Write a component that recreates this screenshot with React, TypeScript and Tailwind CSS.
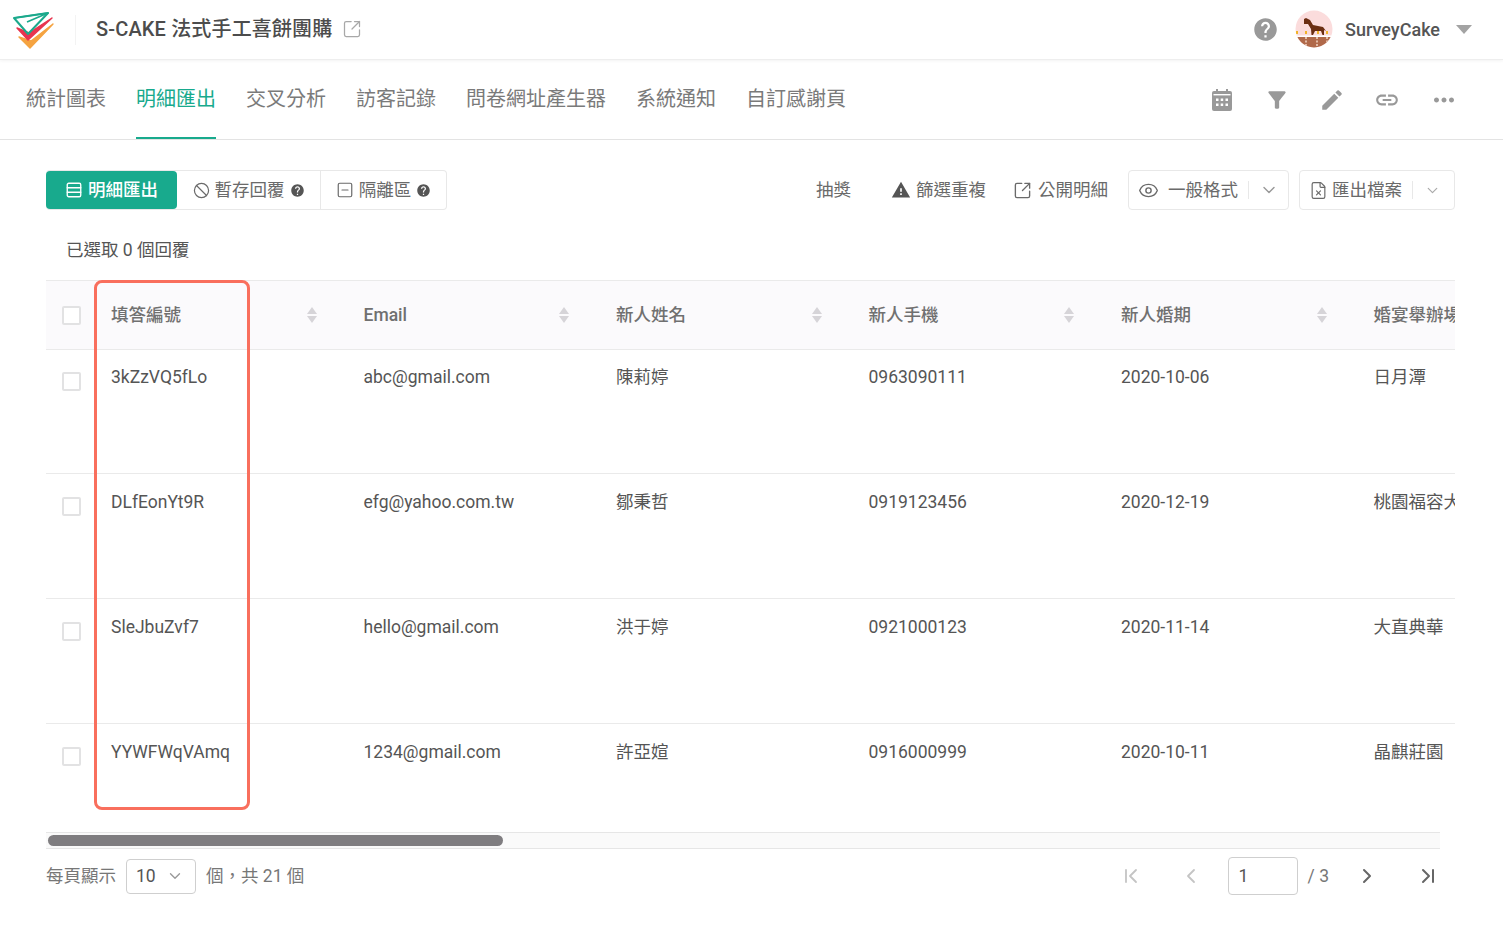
import { Ban, ChevronDown, ChevronFirst, ChevronLast, ChevronLeft, ChevronRight, Eye, FileX, Rows3, SquareArrowOutUpRight, SquareMinus } from "lucide-react"
import { MdEdit, MdFilterAlt, MdHelp, MdLink, MdMoreHoriz, MdWarning } from "react-icons/md"

const font = "font-['Roboto','Noto_Sans_CJK_TC','Noto_Sans',sans-serif]"

const tabs = ["統計圖表", "明細匯出", "交叉分析", "訪客記錄", "問卷網址產生器", "系統通知", "自訂感謝頁"]
const columns = ["填答編號", "Email", "新人姓名", "新人手機", "新人婚期", "婚宴舉辦場地"]

const rows = [
  ["3kZzVQ5fLo", "abc@gmail.com", "陳莉婷", "0963090111", "2020-10-06", "日月潭"],
  ["DLfEonYt9R", "efg@yahoo.com.tw", "鄒秉哲", "0919123456", "2020-12-19", "桃園福容大飯店"],
  ["SleJbuZvf7", "hello@gmail.com", "洪于婷", "0921000123", "2020-11-14", "大直典華"],
  ["YYWFWqVAmq", "1234@gmail.com", "許亞媗", "0916000999", "2020-10-11", "晶麒莊園"],
]

function Logo() {
  return (
    <svg width="42" height="40" viewBox="0 0 42 40" fill="none" className="shrink-0">
      <path d="M7 27 L18 38 L41 14 L19 31 Z" fill="#f5a340" stroke="#f5a340" strokeWidth="1.4" strokeLinejoin="round" />
      <path d="M5 18 L16 30 L40 8 L17 23 Z" fill="#e8344f" stroke="#e8344f" strokeWidth="1.4" strokeLinejoin="round" />
      <path d="M2 8 L36 3 L16 24 Z" stroke="#1ba98c" strokeWidth="2" strokeLinejoin="round" />
      <path d="M2 8 L36 3 L15 12" stroke="#1ba98c" strokeWidth="1.6" strokeLinejoin="round" />
    </svg>
  )
}

function Avatar() {
  return (
    <svg width="38" height="38" viewBox="0 0 38 38" className="shrink-0">
      <clipPath id="av"><circle cx="19" cy="19" r="18.5" /></clipPath>
      <g clipPath="url(#av)">
        <rect width="38" height="38" fill="#fbdcdc" />
        <rect y="27" width="38" height="11" fill="#b0694a" />
        <rect y="25.5" width="38" height="1.5" fill="#ffffff" />
        <path d="M9 9 L11 8 L15 10 L18 15 L28 17 L31 21 L29 20 L29 25 L27.5 25 L26 21 L20 21 L18 25 L16.5 25 L16 19 L13 14 L9 14 Z" fill="#6b2e12" />
        <path d="M1 21h2v3H1zM10 21h2v3h-2zM22 21h2v3h-2zM31 21h2v3h-2z" fill="#f0b429" />
        <path d="M11 27v10M22 27v10M32 27v8" stroke="#f3d9c8" strokeWidth="1.5" strokeDasharray="2 1.5" />
      </g>
    </svg>
  )
}

function CalendarIcon() {
  return (
    <svg width="20" height="22" viewBox="0 0 20 22" className="shrink-0">
      <path d="M4 0h2v3H4zM14 0h2v3h-2z" fill="#999999" />
      <rect y="2" width="20" height="20" rx="2" fill="#999999" />
      <rect x="1.5" y="5" width="17" height="1.4" fill="#ffffff" />
      <path d="M4 9.5h2.5V12H4zM8.7 9.5h2.5V12H8.7zM13.5 9.5H16V12h-2.5zM4 14.5h2.5V17H4zM8.7 14.5h2.5V17H8.7zM13.5 14.5H16V17h-2.5z" fill="#ffffff" />
    </svg>
  )
}

function SortIcon() {
  return (
    <svg width="12" height="18" viewBox="0 0 12 18" className="shrink-0" fill="#d6d4d8">
      <path d="M6 1 L11 8 H1 Z" />
      <path d="M1 10 H11 L6 17 Z" />
    </svg>
  )
}

function Checkbox() {
  return <span className="block h-[19px] w-[19px] rounded-[2px] border-2 border-[#e2e2e3] bg-white" />
}

export default function App() {
  return (
    <div className={`${font} relative min-h-[931px] bg-white text-[#555555] antialiased`}>
      {/* top bar */}
      <header className="flex h-[60px] items-center border-b border-[#eeeeee] pl-[12px] pr-[31px] shadow-[0_1px_3px_rgba(0,0,0,0.05)]">
        <Logo />
        <div className="ml-[21px] h-[30px] w-px bg-[#f3f3f3]" />
        <div className="mb-[2px] ml-[20px] text-[20px] font-medium leading-none tracking-[0.15px] text-[#4c4c4c]">S-CAKE 法式手工喜餅團購</div>
        <SquareArrowOutUpRight className="mb-[2px] ml-[10px] h-[20px] w-[20px] text-[#a8a8a8]" strokeWidth={1.5} />
        <div className="ml-auto flex items-center">
          <MdHelp className="h-[27px] w-[27px] text-[#999999]" />
          <div className="mb-[2px] ml-[16px]"><Avatar /></div>
          <span className="ml-[12px] text-[18px] font-medium text-[#555555]">SurveyCake</span>
          <svg width="16" height="9" viewBox="0 0 16 9" className="ml-[16px]" fill="#a3a3a3"><path d="M0 0 H16 L8 9 Z" /></svg>
        </div>
      </header>

      {/* tabs */}
      <nav className="flex h-[80px] items-stretch border-b border-[#e3e3e3] pl-[26px] pr-[44px]">
        <div className="flex gap-[30px]">
          {tabs.map((t) => (
            <div
              key={t}
              className={
                t === "明細匯出"
                  ? "flex items-center border-b-2 border-[#18aa8d] text-[20px] text-[#18aa8d]"
                  : "flex items-center border-b-2 border-transparent text-[20px] text-[#7a7a7a]"
              }
            >
              {t}
            </div>
          ))}
        </div>
        <div className="ml-auto flex items-center gap-[29px] text-[#999999]">
          <span className="flex w-[26px] justify-center"><CalendarIcon /></span>
          <MdFilterAlt className="h-[26px] w-[26px]" />
          <MdEdit className="h-[26px] w-[26px]" />
          <MdLink className="h-[26px] w-[26px]" />
          <MdMoreHoriz className="h-[30px] w-[30px]" />
        </div>
      </nav>

      <main className="pl-[46px] pr-[48px]">
        {/* toolbar */}
        <div className="flex items-center pt-[30px] text-[17.5px]">
          <div className="flex h-[40px] items-stretch rounded-[4px] border border-[#e8e8e8] border-l-0">
            <div className="flex w-[131px] items-center justify-center gap-[5px] rounded-[4px] bg-[#18aa8d] font-medium text-white">
              <Rows3 className="h-[18px] w-[18px]" strokeWidth={1.8} />
              明細匯出
            </div>
            <div className="flex w-[144px] items-center justify-center gap-[5px] border-r border-[#e8e8e8] text-[#6a6a6a]">
              <Ban className="h-[17px] w-[17px]" strokeWidth={1.7} />
              暫存回覆
              <MdHelp className="h-[15px] w-[15px] text-[#555555]" />
            </div>
            <div className="flex w-[125px] items-center justify-center gap-[5px] text-[#6a6a6a]">
              <SquareMinus className="h-[18px] w-[18px]" strokeWidth={1.6} />
              隔離區
              <MdHelp className="h-[15px] w-[15px] text-[#555555]" />
            </div>
          </div>

          <div className="ml-auto flex items-center text-[#6a6a6a]">
            <span>抽獎</span>
            <MdWarning className="ml-[40px] h-[20px] w-[20px] text-[#555555]" />
            <span className="ml-[5px]">篩選重複</span>
            <SquareArrowOutUpRight className="ml-[27px] h-[19px] w-[19px]" strokeWidth={1.7} />
            <span className="ml-[6px]">公開明細</span>
            <div className="ml-[20px] flex h-[40px] w-[161px] items-center rounded-[4px] border border-[#e8e8e8] pl-[9px]">
              <Eye className="h-[21px] w-[21px]" strokeWidth={1.6} />
              <span className="ml-[9px]">一般格式</span>
              <span className="ml-[10px] h-[18px] w-px bg-[#e8e8e8]" />
              <ChevronDown className="ml-[10px] h-[20px] w-[20px] text-[#999999]" strokeWidth={1.7} />
            </div>
            <div className="ml-[10px] flex h-[40px] w-[156px] items-center rounded-[4px] border border-[#e8e8e8] pl-[9px]">
              <FileX className="h-[19px] w-[19px]" strokeWidth={1.5} />
              <span className="ml-[4px]">匯出檔案</span>
              <span className="ml-[10px] h-[18px] w-px bg-[#e8e8e8]" />
              <ChevronDown className="ml-[11px] h-[17px] w-[17px] text-[#aaaaaa]" strokeWidth={1.7} />
            </div>
          </div>
        </div>

        <div className="flex h-[70px] items-center pl-[20px] pt-[10px] text-[17.5px] text-[#555555]">已選取 0 個回覆</div>

        {/* table */}
        <div className="w-[1409px] overflow-hidden text-[17.5px]">
          <div className="w-[1600px]">
            <div className="flex h-[70px] w-[1409px] items-center border-y border-[#eaeaea] bg-[#fbfafc]">
              <div className="flex w-[49px] shrink-0 items-center pl-[16px]"><Checkbox /></div>
              {columns.map((c) => (
                <div key={c} className="flex w-[252.5px] shrink-0 items-center justify-between pl-[16px] pr-[30px] font-medium text-[#707070]">
                  <span className="whitespace-nowrap">{c}</span>
                  <SortIcon />
                </div>
              ))}
            </div>
            {rows.map((row, r) => (
              <div key={row[0]} className={r === 0 ? "flex h-[123px] w-[1409px]" : "flex h-[125px] w-[1409px] border-t border-[#eaeaea]"}>
                <div className={r === 0 ? "w-[49px] shrink-0 pl-[16px] pt-[22px]" : "w-[49px] shrink-0 pl-[16px] pt-[23px]"}><Checkbox /></div>
                {row.map((cell, i) => (
                  <div key={i} className={r === 0 ? "w-[252.5px] shrink-0 whitespace-nowrap pl-[16px] pt-[14px]" : "w-[252.5px] shrink-0 whitespace-nowrap pl-[16px] pt-[15px]"}>{cell}</div>
                ))}
              </div>
            ))}
          </div>
        </div>

        {/* horizontal scrollbar */}
        <div className="mt-[-16px] flex h-[17px] w-[1394px] items-center border-y border-[#e6e6e6] bg-[#fafafa] px-[2px]">
          <div className="h-[11px] w-[455px] rounded-full bg-[#7f7d80]" />
        </div>

        {/* pagination */}
        <div className="flex items-center pt-[8px] text-[17.5px] text-[#777777]">
          <span>每頁顯示</span>
          <div className="ml-[10px] flex h-[35px] w-[70px] items-center justify-between rounded-[4px] border border-[#cfcfcf] pl-[9px] pr-[11px] text-[#555555]">
            10
            <ChevronDown className="h-[18px] w-[18px] text-[#999999]" strokeWidth={1.8} />
          </div>
          <span className="ml-[10px]">個，共 21 個</span>

          <div className="ml-auto flex items-center pr-[15px]">
            <ChevronFirst className="h-[24px] w-[24px] text-[#c4c4c4]" strokeWidth={1.8} />
            <ChevronLeft className="ml-[36px] h-[24px] w-[24px] text-[#c4c4c4]" strokeWidth={1.8} />
            <div className="ml-[25px] flex h-[38px] w-[70px] items-center rounded-[4px] border border-[#cfcfcf] pl-[10px] text-[#555555]">1</div>
            <span className="ml-[10px]">/ 3</span>
            <ChevronRight className="ml-[26px] h-[24px] w-[24px] text-[#666666]" strokeWidth={2} />
            <ChevronLast className="ml-[37px] h-[24px] w-[24px] text-[#666666]" strokeWidth={2} />
          </div>
        </div>
      </main>

      {/* red highlight over the first column */}
      <div className="pointer-events-none absolute left-[94px] top-[280px] h-[530px] w-[156px] rounded-[8px] border-[3px] border-[#f96f5d]" />
    </div>
  )
}
